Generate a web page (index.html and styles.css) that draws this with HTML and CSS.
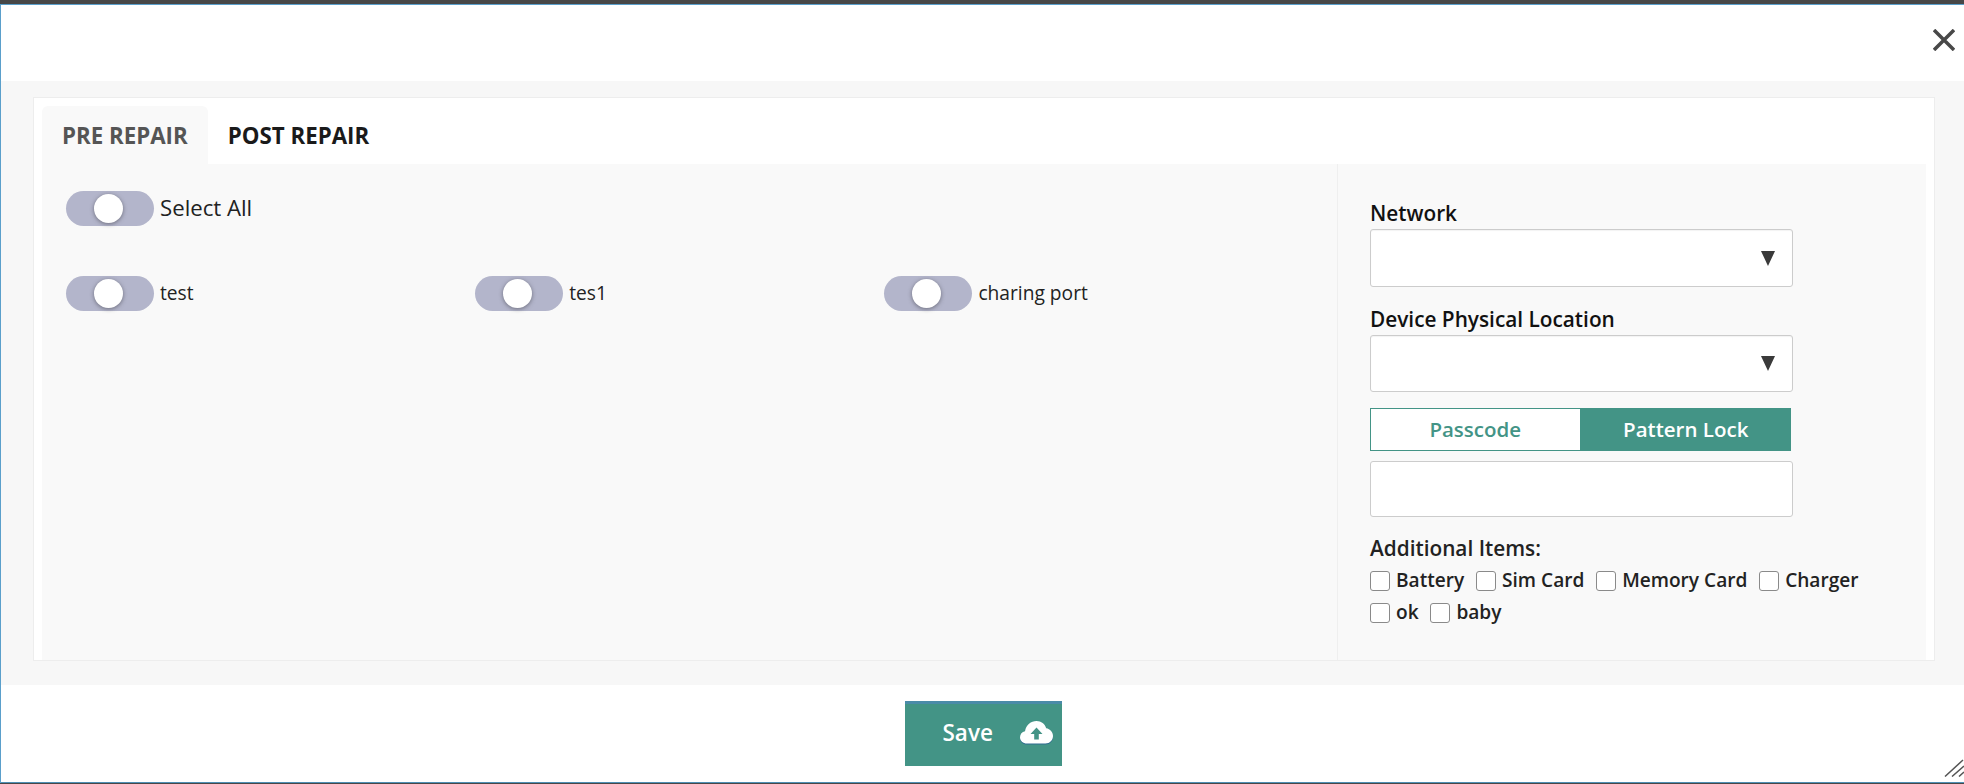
FILE: index.html
```html
<!DOCTYPE html>
<html lang="en">
  <head>
    <meta charset="UTF-8" />
    <title>Pre Repair</title>
    <link rel="stylesheet" href="styles.css">
  </head>
  <body>
    <div class="modal">
      <div class="modal-header">
        <svg class="close-icon" viewBox="0 0 22 22" fill="none" stroke="#484848" stroke-width="3.500">
          <path d="M1 1l20 20M21 1L1 21" />
        </svg>
      </div>

      <div class="modal-body">
        <div class="card">
          <div class="tabs">
            <div class="tab active">PRE REPAIR</div>
            <div class="tab">POST REPAIR</div>
          </div>

          <div class="panel">
            <div class="checks">
              <div class="select-all">
                <span class="toggle"><span class="knob"></span></span>
                <span class="toggle-label">Select All</span>
              </div>
              <div class="check-grid">
                <div class="check-item">
                  <span class="toggle"><span class="knob"></span></span>
                  <span class="toggle-label">test</span>
                </div>
                <div class="check-item">
                  <span class="toggle"><span class="knob"></span></span>
                  <span class="toggle-label">tes1</span>
                </div>
                <div class="check-item">
                  <span class="toggle"><span class="knob"></span></span>
                  <span class="toggle-label">charing port</span>
                </div>
              </div>
            </div>

            <div class="side">
              <label class="field-label">Network</label>
              <div class="select-box"><span class="arrow"></span></div>

              <label class="field-label second">Device Physical Location</label>
              <div class="select-box short"><span class="arrow"></span></div>

              <div class="lock-switch">
                <div class="lock-option">Passcode</div>
                <div class="lock-option selected">Pattern Lock</div>
              </div>
              <input class="lock-input" type="text" />

              <div class="items-title">Additional Items:</div>
              <div class="items">
                <label class="item"><input type="checkbox" />Battery</label>
                <label class="item"><input type="checkbox" />Sim Card</label>
                <label class="item"><input type="checkbox" />Memory Card</label>
                <label class="item"><input type="checkbox" />Charger</label>
                <label class="item"><input type="checkbox" />ok</label>
                <label class="item"><input type="checkbox" />baby</label>
              </div>
            </div>
          </div>
        </div>
      </div>

      <div class="modal-footer">
        <button class="save-btn" type="button">
          <span>Save</span>
          <svg class="cloud-icon" viewBox="0 0 33 23">
            <path fill="#fff" d="M7 22.500C3 22.500 0 19.800 0 16.200c0-3 2-5.400 5-6C6 4 11 0 16.500 0c4.700 0 8.500 3 9.700 7.300 3.900.6 6.800 4 6.800 7.700 0 4.300-3.300 7.500-7.500 7.500z" />
            <path fill="#439486" d="M16.500 6.500l6 6.500h-3.700v5.500h-4.600V13h-3.700z" />
          </svg>
        </button>
      </div>

      <svg class="resize-grip" viewBox="0 0 20 18" fill="none" stroke="#555" stroke-width="1.500">
        <path d="M1 17.500L19 1M8 17.500L20 7M15 17.500l5-4.500" />
      </svg>
    </div>
  </body>
</html>
```

FILE: styles.css
```css
* {
  margin: 0;
  padding: 0;
  box-sizing: border-box;
}

html,
body {
  height: 100%;
  overflow: hidden;
}

body {
  font-family: "Open Sans", sans-serif;
  color: #222;
  background: #fff;
}

.modal {
  position: relative;
  height: 784px;
  display: flex;
  flex-direction: column;
  background: #fff;
  border-top: 4px solid #474747;
  border-bottom: 1px solid #474747;
  box-shadow: inset 1px 0 0 #5a9fcb, inset 0 1px 0 #5a9fcb, inset 0 -1px 0 #4f8fb5;
}

.modal-header {
  height: 77px;
  display: flex;
  justify-content: flex-end;
  padding: 25px 9px 0 0;
}

.close-icon {
  width: 22px;
  height: 22px;
}

.modal-body {
  height: 604px;
  margin-left: 1px;
  padding: 16px 29px 24px 32px;
  background: #f7f7f7;
}

.card {
  height: 564px;
  display: flex;
  flex-direction: column;
  background: #fff;
  border: 1px solid #ededed;
  padding: 8px 8px 0 8px;
}

.tabs {
  display: flex;
  height: 58px;
}

.tab {
  padding: 0 20px;
  font-size: 22.300px;
  font-weight: 700;
  line-height: 59px;
  color: #1a1a1a;
}

.tab.active {
  color: #555;
  background: #f9f9f9;
  border-radius: 6px 6px 0 0;
}

.panel {
  flex: 1;
  display: flex;
  background: #f9f9f9;
}

.checks {
  width: 1295px;
  padding: 27px 24px 0 24px;
}

.select-all {
  display: flex;
  align-items: center;
  gap: 6px;
  font-size: 22.200px;
  line-height: 32px;
  height: 35px;
}

.check-grid {
  display: grid;
  grid-template-columns: repeat(3, 409.200px);
  margin-top: 50px;
}

.check-item {
  display: flex;
  align-items: center;
  gap: 6px;
  font-size: 19.200px;
  line-height: 32px;
  height: 35px;
}

.toggle-label {
  padding-bottom: 2px;
}

.toggle {
  width: 88px;
  height: 35px;
  display: flex;
  align-items: center;
  padding-left: 28px;
  border-radius: 18px;
  background: #b3b5cb;
}

.knob {
  width: 29px;
  height: 29px;
  border-radius: 50%;
  background: #fff;
  box-shadow: 0 1px 4px rgba(60, 60, 70, 0.6);
}

.side {
  flex: 1;
  border-left: 1px solid #efefef;
  padding: 34px 0 0 32px;
}

.field-label {
  display: block;
  font-size: 20.800px;
  font-weight: 600;
  line-height: 31px;
  color: #111;
}

.field-label.second {
  margin-top: 17px;
}

.select-box {
  width: 423px;
  height: 58px;
  display: flex;
  align-items: center;
  justify-content: flex-end;
  padding-right: 17px;
  background: #fff;
  border: 1px solid #ccc;
  border-radius: 3px;
  box-shadow: inset 0 1px 1px rgba(0, 0, 0, 0.05);
}

.select-box.short {
  height: 57px;
}

.arrow {
  width: 0;
  height: 0;
  border-left: 7.500px solid transparent;
  border-right: 7.500px solid transparent;
  border-top: 15px solid #3a3a3a;
}

.lock-switch {
  width: 421px;
  height: 43px;
  display: flex;
  margin-top: 16px;
}

.lock-option {
  flex: 1;
  display: flex;
  align-items: center;
  justify-content: center;
  padding-bottom: 2px;
  background: #fff;
  border: 1px solid #439486;
  color: #439486;
  font-size: 20.500px;
  font-weight: 600;
}

.lock-option.selected {
  background: #439486;
  color: #fff;
}

.lock-input {
  display: block;
  width: 423px;
  height: 56px;
  margin-top: 10px;
  background: #fff;
  border: 1px solid #ccc;
  border-radius: 3px;
}

.items-title {
  margin-top: 18px;
  font-size: 20.800px;
  font-weight: 600;
  line-height: 26px;
  color: #222;
}

.items {
  width: 520px;
  display: flex;
  flex-wrap: wrap;
  margin-top: 6px;
  column-gap: 11.800px;
  row-gap: 6px;
}

.item {
  display: flex;
  align-items: center;
  gap: 6px;
  height: 26px;
  font-size: 19.100px;
  font-weight: 600;
  color: #222;
}

.item input {
  appearance: none;
  width: 20px;
  height: 20px;
  margin-top: 2px;
  background: #fff;
  border: 1px solid #8a8a8a;
  border-radius: 3px;
}

.modal-footer {
  flex: 1;
  display: flex;
  justify-content: center;
  padding: 16px 0 0 2px;
}

.save-btn {
  width: 157px;
  height: 65px;
  display: flex;
  align-items: center;
  padding: 0 0 5px 38px;
  gap: 27px;
  background: #439486;
  border: none;
  border-top: 3px solid #4a8ba8;
  color: #fff;
  font-family: inherit;
  font-size: 22.500px;
  font-weight: 600;
}

.cloud-icon {
  width: 33px;
  height: 23px;
  filter: drop-shadow(0 1px 0 #2f6b8f);
}

.resize-grip {
  position: absolute;
  right: 0;
  bottom: 6px;
  width: 20px;
  height: 18px;
}
```
